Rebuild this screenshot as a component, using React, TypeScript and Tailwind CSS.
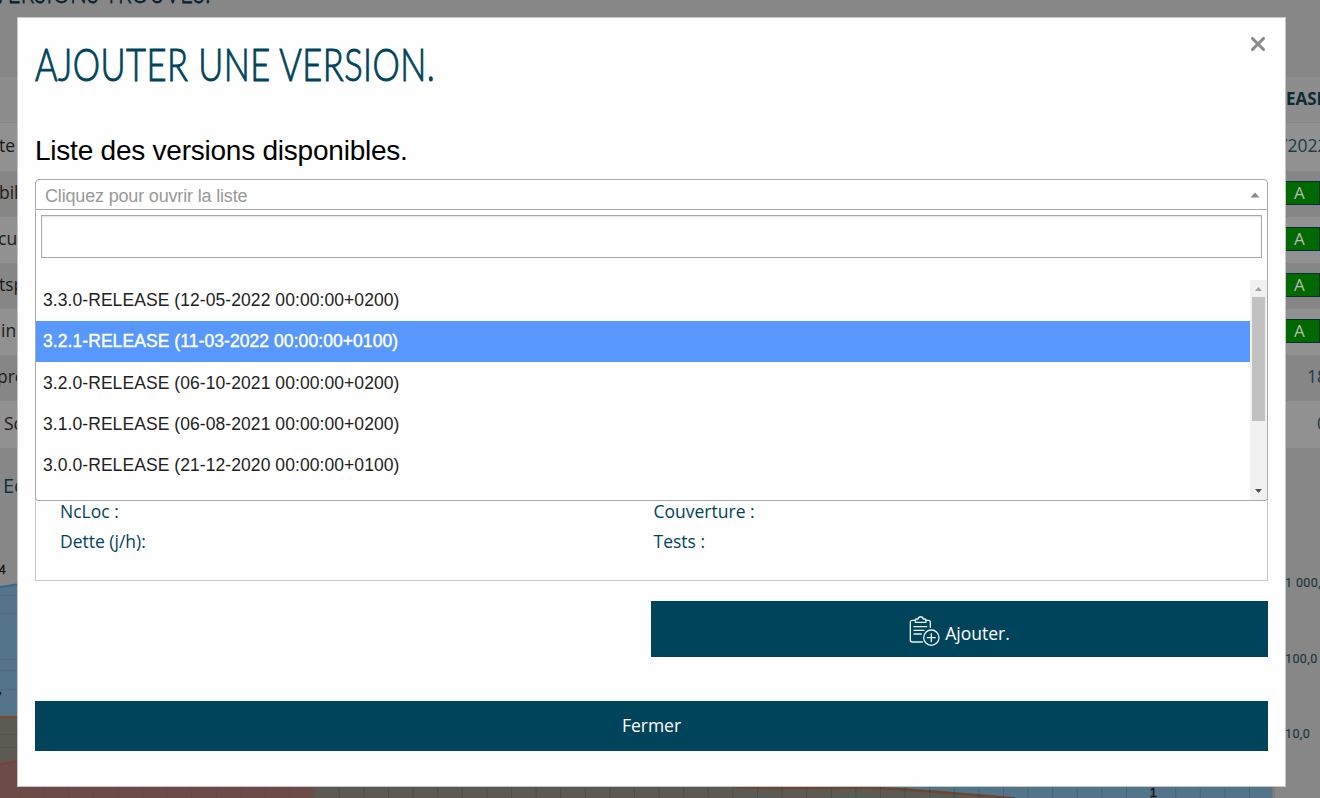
import type { ReactNode } from 'react';

const metrics = [
  { label: 'te', pad: '-ml-px', value: '/2022', tone: 'bg-[#919191] h-[48px]', valuePad: '-indent-[4px]' },
  { label: 'bilité', pad: '-ml-px', grade: 'A', tone: 'bg-[#868686] h-[46px]' },
  { label: 'curité', pad: '-ml-[2px]', grade: 'A', tone: 'bg-[#919191] h-[46px]' },
  { label: 'tspot', pad: '-ml-px', grade: 'A', tone: 'bg-[#868686] h-[46px]' },
  { label: 'in', pad: 'pl-px', grade: 'A', tone: 'bg-[#919191] h-[46px]' },
  { label: 'pre', pad: '-ml-[3px]', value: '18', tone: 'bg-[#868686] h-[46px]', valuePad: 'pl-[22px]' },
  { label: 'Sc', pad: 'pl-[4px]', value: '0', tone: 'bg-[#919191] h-[47px]', valuePad: 'pl-[32px]' },
];

const versions = [
  '3.3.0-RELEASE (12-05-2022 00:00:00+0200)',
  '3.2.1-RELEASE (11-03-2022 00:00:00+0100)',
  '3.2.0-RELEASE (06-10-2021 00:00:00+0200)',
  '3.1.0-RELEASE (06-08-2021 00:00:00+0200)',
  '3.0.0-RELEASE (21-12-2020 00:00:00+0100)',
];

const gridColumns = Array.from({ length: 52 }, (_, i) => 19.5 + i * 24.6);

function HandTitle({ children, className }: { children: ReactNode; className: string }) {
  return (
    <h2 className={`inline-block origin-left scale-x-[0.75] whitespace-nowrap font-['Lato'] font-light leading-[60px] tracking-[0.6px] ${className}`}>
      {children}
    </h2>
  );
}

function Chart() {
  return (
    <svg width="1320" height="245" viewBox="0 553 1320 245" className="block">
      <path d="M0 587 L17 584 H1272 V798 H0Z" fill="#54748a" />
      <path d="M0 587 L17 584.5" stroke="#34688f" strokeWidth="2" />
      <path d="M0 716 H17 L735 787 Q790 790 860 787 Q900 788 1015 798 H0Z" fill="#5d5a54" />
      <path d="M0 717 H17" stroke="#774b30" strokeWidth="2" />
      <path d="M735 787 Q790 789 860 787.5 Q900 788 1015 798.5" fill="none" stroke="#6b4630" strokeWidth="2.5" />
      <path d="M0 764 L17 761 L313 786 V798 H0Z" fill="#6d4b46" />
      <path d="M0 764 L17 761.5" stroke="#7c403b" strokeWidth="2" />
      {[595, 613, 659, 670, 689, 734, 747].map((y) => (
        <path key={y} d={`M0 ${y}.5H1272`} stroke="#000" strokeOpacity=".07" />
      ))}
      {gridColumns.map((x) => (
        <path key={x} d={`M${x} 787V798`} stroke="#000" strokeOpacity={x > 320 ? '.13' : '.03'} />
      ))}
      <path d="M1272.5 787V798" stroke="#777" />
      <g fontFamily="Liberation Sans" fontSize="12">
        <text x="-1" y="574" fill="#111" stroke="#111" strokeWidth=".3">4</text>
        <text x="-5" y="701" fontWeight="bold" fill="#111">7</text>
        <text x="1150" y="797" fill="#111" stroke="#111" strokeWidth=".4">1</text>
        <g fill="#1e3540" fontFamily="Roboto, sans-serif" fontSize="12.5" letterSpacing=".4" stroke="#1e3540" strokeWidth=".15">
          <text x="1285" y="587">1 000,0</text>
          <text x="1285" y="663">100,0</text>
          <text x="1285" y="738">10,0</text>
        </g>
      </g>
    </svg>
  );
}

function Dashboard() {
  return (
    <div className="flex h-[798px] w-[1320px] flex-col overflow-hidden bg-[#878787] font-['Open_Sans'] text-[17.5px]">
      <div className="relative h-[77px] shrink-0">
        <div className="absolute left-[-7px] top-[-38px]">
          <HandTitle className="text-[29px] text-[#06242f] [-webkit-text-stroke:0.8px_#06242f]">VERSIONS TROUVÉS.</HandTitle>
        </div>
      </div>
      <div className="flex h-[46px] shrink-0 items-center justify-end border-b border-[#868686] bg-[#8d8d8d]">
        <span className="w-[34px] overflow-hidden pb-[2px] text-[17px] font-bold text-[#0c2c38]">EASE</span>
      </div>
      {metrics.map((m) => (
        <div key={m.label} className={`flex shrink-0 items-center justify-between ${m.tone}`}>
          <span className={`pb-[3px] text-[#1b1b1b] ${m.pad}`}>{m.label}</span>
          {m.grade ? (
            <span className="mb-[3px] flex h-[24px] w-[35px] items-center border border-[#09303a] bg-[#006900] pb-px pl-[8px] text-[17px] leading-none text-[#b9b9b9]">
              {m.grade}
            </span>
          ) : (
            <span className={`w-[35px] overflow-hidden whitespace-nowrap pb-[3px] text-[#1b3c49] ${m.valuePad ?? ''}`}>{m.value}</span>
          )}
        </div>
      ))}
      <div className="h-[105px] shrink-0 pl-[3px] pt-[23px] text-[20px] leading-[30px] text-[#0c3342]">Ec</div>
      <Chart />
    </div>
  );
}

function ClipboardPlus() {
  return (
    <svg width="31" height="31" viewBox="0 0 93 93" fill="none" stroke="#e8f0f2" strokeWidth="4" strokeLinecap="round" strokeLinejoin="round" className="mt-[4px]">
      <path d="M20 13H10a6 6 0 0 0-6 6V72a6 6 0 0 0 6 6H40" />
      <path d="M50 13H58a6 6 0 0 1 6 6V34" />
      <path d="M19 19V12a3 3 0 0 1 3-3H27C29 0 41 0 43 9H48a3 3 0 0 1 3 3V19Z" />
      <path d="M15 32H53M15 43H45M15 54H37" />
      <circle cx="67" cy="65" r="23" />
      <path d="M67 53V77M55 65H79" />
    </svg>
  );
}

function VersionSelect() {
  return (
    <div className="relative z-10 font-['Liberation_Sans']">
      <div className="flex h-[31px] items-center justify-between rounded-t-[4px] border border-[#aaa] bg-white pl-[9px] pr-[7px]">
        <span className="pt-[2px] text-[18px] leading-[22px] tracking-[-0.17px] text-[#999]">Cliquez pour ouvrir la liste</span>
        <svg width="10" height="6" viewBox="0 0 10 6"><path d="M0.5 5.5L5 .5L9.500 5.500Z" fill="#888" /></svg>
      </div>
      <div className="absolute left-0 top-[31px] h-[291px] w-full rounded-b-[4px] border border-t-0 border-[#aaa] bg-white">
        <div className="px-[5px] pt-[5px]">
          <input aria-label="Rechercher" className="block h-[43px] w-full border border-[#aaa] bg-white shadow-[inset_0_1px_2px_rgba(10,10,10,0.12)] outline-none" />
        </div>
        <div className="mt-[22px] flex h-[220px] overflow-hidden">
          <ul className="flex-1">
            {versions.map((v, i) => (
              <li
                key={v}
                className={`flex h-[41.2px] items-center pl-[7px] text-[17.5px] ${i === 1 ? 'bg-[#5897fb] pb-[2px] tracking-[0.07px] text-white [-webkit-text-stroke:0.4px_white]' : 'tracking-[0.07px] text-[#222]'}`}
              >
                {v}
              </li>
            ))}
          </ul>
          <div className="flex w-[17px] flex-col items-center justify-between rounded-br-[4px] bg-[#f1f1f1]">
            <div className="flex flex-col items-center">
              <span className="flex h-[17px] items-center"><svg width="7" height="4" viewBox="0 0 7 4"><path d="M0 4L3.500 0L7 4Z" fill="#a3a3a3" /></svg></span>
              <span className="h-[124px] w-[13px] bg-[#c1c1c1]" />
            </div>
            <span className="flex h-[18px] items-center"><svg width="7" height="4" viewBox="0 0 7 4"><path d="M0 0L3.500 4L7 0Z" fill="#505050" /></svg></span>
          </div>
        </div>
      </div>
    </div>
  );
}

export default function App() {
  return (
    <div className="relative h-[798px] w-[1320px] overflow-hidden">
      <Dashboard />
      <div className="absolute left-[17px] top-[17px] flex h-[770px] w-[1269px] flex-col border border-[#c6c6c6] bg-[#fefefe] px-[17px] font-['Open_Sans']">
        <div className="flex h-[103px] items-start justify-between pt-[16px]">
          <HandTitle className="text-[46px] text-[#00445b] [-webkit-text-stroke:1px_#00445b]">AJOUTER UNE VERSION.</HandTitle>
          <button aria-label="Fermer la fenêtre" className="mr-[2px] mt-[2px]">
            <svg width="16" height="16" viewBox="0 0 16 16"><path d="M2.500 2.500L13.500 13.500M13.500 2.500L2.500 13.500" stroke="#8a8a8a" strokeWidth="3.100" strokeLinecap="round" /></svg>
          </button>
        </div>
        <h3 className="h-[58px] pt-[10px] font-['Liberation_Sans'] text-[28px] leading-[40px] tracking-[-0.23px] text-black">Liste des versions disponibles.</h3>
        <VersionSelect />
        <div className="flex h-[371px] flex-col justify-end border border-t-0 border-[#c8c8c8] pb-[24px] pl-[24px] text-[17.5px] leading-[30px] text-[#00445b]">
          <div className="grid grid-cols-[593.500px_1fr]">
            <span>NcLoc :</span>
            <span>Couverture :</span>
            <span>Dette (j/h):</span>
            <span>Tests :</span>
          </div>
        </div>
        <div className="mt-[20px] flex justify-end">
          <button className="flex h-[56px] w-[617px] items-center justify-center gap-[5px] bg-[#00445b] text-[17.5px] text-white">
            <ClipboardPlus />
            <span className="pt-[8px]">Ajouter.</span>
          </button>
        </div>
        <button className="mt-[44px] h-[50px] bg-[#00445b] pb-[2px] text-[17.5px] text-white">Fermer</button>
      </div>
    </div>
  );
}
